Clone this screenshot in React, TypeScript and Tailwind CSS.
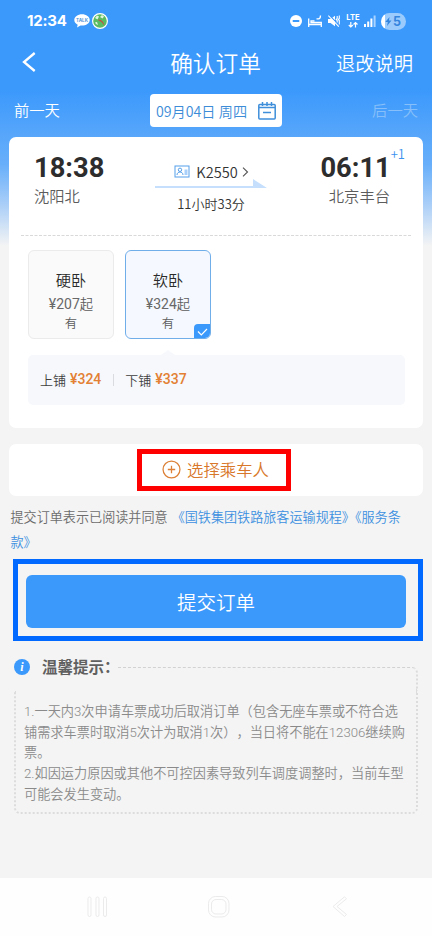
import type { ReactNode } from "react";

const cjk = "font-['Noto_Sans_CJK_SC',sans-serif]";
const mix = "font-[Roboto,'Noto_Sans_CJK_SC',sans-serif]";
const demi = "font-['Noto_Sans_CJK_SC_DemiLight','Noto_Sans_CJK_SC',sans-serif] [font-weight:350]";

function StatusBar() {
  return (
    <div className="flex h-[42px] items-center justify-between pl-[27px] pr-[26px] text-white">
      <div className="flex items-center">
        <span className="w-[47px] font-[Inter,sans-serif] text-[15px] font-bold leading-[20px] tracking-[-0.2px]">12:34</span>
        <svg width="16" height="14" viewBox="0 0 16 14">
          <path d="M8 0.3C3.8 0.3 0.3 2.8 0.3 6c0 2 1.3 3.7 3.4 4.8L3 13.6l3.5-2.1C11.500 12 15.700 9.500 15.700 6 15.700 2.800 12.200 0.300 8 0.300Z" fill="#fff" />
          <text x="8" y="7.700" textAnchor="middle" fontSize="4.600" fontWeight="700" fontFamily="Inter" fill="#5296d8">TALK</text>
        </svg>
        <svg className="ml-[2px]" width="16" height="16" viewBox="0 0 16 16">
          <circle cx="8" cy="8" r="7.400" fill="#5bbb62" stroke="#fff" strokeWidth="1.200" />
          <path d="M3 5 5 2.500l2 1-1.500 3Z M8 4l2-2 2 1.500-1.500 2Z M3 9.500l2-.5 1 3-2-1Z" fill="#e3f5df" />
          <path d="M5.500 6.800c4-.3 6 1.500 6.800 5.700L9.500 9Z" fill="#c74a42" />
        </svg>
      </div>
      <div className="flex items-center">
        <svg width="12" height="12" viewBox="0 0 12 12">
          <circle cx="6" cy="6" r="6" fill="#fff" />
          <rect x="2.700" y="5" width="6.600" height="2" rx="0.500" fill="#3b99fc" />
        </svg>
        <svg className="ml-[6px]" width="14" height="12" viewBox="0 0 14 12" fill="none" stroke="#fff" strokeWidth="1.300">
          <path d="M.7 3.500V12M.7 9.500h12.600M13.300 12V7.500H3V5.800h3.500M8.500 3.800h2c1.500 0 2-1 2-3.300" />
        </svg>
        <svg className="ml-[6px]" width="12" height="12" viewBox="0 0 12 12">
          <path d="M0 4h2.500L7 .8v10.400L2.500 8H0Z" fill="#fff" />
          <path d="m1 0 11 11" stroke="#3b99fc" strokeWidth="1.200" />
          <path d="m.3.600 10.500 11M9.200 1v2.500l-1 1 1 1v2M11.300.5v3l-1 1 1 1v4" fill="none" stroke="#fff" strokeWidth="1.100" />
        </svg>
        <svg className="ml-[6px]" width="14" height="14" viewBox="0 0 14 14">
          <text x="7" y="6.300" textAnchor="middle" fontFamily="Inter" fontSize="7.600" fontWeight="700" fill="#fff">LTE</text>
          <path d="M4.800 8v5M2.800 11l2 2 2-2M9.500 13.500v-5M7.500 10.500l2-2 2 2" fill="none" stroke="#fff" strokeWidth="1.200" />
        </svg>
        <svg className="ml-[4px]" width="12" height="12" viewBox="0 0 12 12">
          <path d="M0 9h2v3H0ZM3.200 6.500h2V12h-2ZM6.400 3.500h2V12h-2Z" fill="#fff" />
          <path d="M9.600.5h2V12h-2Z" fill="#a8d2ff" />
        </svg>
        <div className="ml-[5px] flex h-[17px] w-[25px] items-center overflow-hidden rounded-full bg-gradient-to-r from-white from-[14%] to-[#9bcbfd] to-[14%] pl-[4px]">
          <svg width="7" height="9" viewBox="0 0 7 9"><path d="M4.500 0 .3 5h2.500L2 9l4.500-5.500H4Z" fill="#3485de" /></svg>
          <span className="ml-[1px] font-[Inter,sans-serif] text-[12.500px] font-bold leading-[17px] text-[#3485de]">5</span>
        </div>
      </div>
    </div>
  );
}

function Header() {
  return (
    <div className={`grid h-[42px] grid-cols-[1fr_auto_1fr] items-center pl-[22px] pr-[19px] text-white ${demi}`}>
      <svg className="-mt-[3px]" width="14" height="20" viewBox="0 0 14 20" fill="none" stroke="#fff" strokeWidth="2.300">
        <path d="M12.700 1 2 10l10.700 9" />
      </svg>
      <span className="-ml-[4px] text-[22.700px] leading-[40px]">确认订单</span>
      <span className="justify-self-end text-[19.300px] leading-[40px]">退改说明</span>
    </div>
  );
}

function DateRow() {
  return (
    <div className={`mt-[10px] flex h-[33px] items-center justify-between px-[14px] text-white ${demi}`}>
      <span className="-mt-[3px] w-[136px] text-[15.300px] leading-[32px]">前一天</span>
      <div className="flex h-[33px] w-[132px] items-center justify-between rounded-[4px] bg-white px-[6px] text-[#3c8cd8]">
        <span className="whitespace-nowrap text-[14.200px] leading-[32px]">09月04日 周四</span>
        <svg width="18" height="18" viewBox="0 0 18 18" fill="none" stroke="#3f8fda" strokeWidth="1.500">
          <rect x="0.800" y="2.500" width="16.400" height="14.500" rx="1" />
          <path d="M1 5.500h16M4.500 0v4M9 0v4M13.500 0v4M5 10.500h8" />
        </svg>
      </div>
      <span className="-mt-[3px] w-[136px] text-right text-[15.300px] leading-[32px] text-[#86bff9]">后一天</span>
    </div>
  );
}

function Trip() {
  return (
    <div className="flex h-[98px] justify-between pl-[25px] pr-[16px]">
      <div className="w-[90px] pt-[13px]">
        <div className="font-[Roboto] text-[27.300px] font-bold leading-[36px] text-[#2d2d2d]">18:38</div>
        <div className={`-mt-[1px] text-[15.300px] leading-[20px] text-[#5c5c5c] ${demi}`}>沈阳北</div>
      </div>
      <div className={`-ml-[19px] flex w-[112px] flex-col items-center pt-[24px] text-[#333] ${demi}`}>
        <div className="flex h-[21px] items-center pl-[1px]">
          <svg width="16" height="13" viewBox="0 0 16 13" fill="none" stroke="#569fe9" strokeWidth="1">
            <rect x="1" y="1" width="14" height="11" />
            <circle cx="6" cy="4.800" r="1.700" /><path d="M3 10c0-4 6-4 6 0" />
            <path d="M10.500 4.500h3v5.500h-3Z" fill="#a8d0fa" stroke="none" />
          </svg>
          <span className="ml-[6px] text-[14.600px] leading-[21px]">K2550</span>
          <svg className="ml-[4px]" width="7" height="10" viewBox="0 0 7 10" fill="none" stroke="#555" strokeWidth="1.100"><path d="m1 .7 4.500 4.300L1 9.300" /></svg>
        </div>
        <svg className="-mt-[3px]" width="112" height="10" viewBox="0 0 112 10"><path d="M0 7h98V0l14 9H0Z" fill="#c5dffc" /></svg>
        <span className="mt-[4px] whitespace-nowrap text-[13px] leading-[21px]">11小时33分</span>
      </div>
      <div className="w-[90px] pt-[13px]">
        <div className="flex justify-end">
          <span className="font-[Roboto] text-[27.300px] font-bold leading-[36px] text-[#2d2d2d]">06:11</span>
          <span className={`-mt-[5px] mr-[2px] text-[13px] leading-[18px] text-[#3c92ee] ${demi}`}>+1</span>
        </div>
        <div className={`-mt-[1px] mr-[17px] text-right text-[15.300px] leading-[20px] text-[#5c5c5c] ${demi}`}>北京丰台</div>
      </div>
    </div>
  );
}

function Seat({ name, price, selected }: { name: string; price: string; selected?: boolean }) {
  return (
    <div
      className={`relative h-[89px] w-[86px] overflow-hidden rounded-[6px] border pt-[17px] text-center text-[#5c5c5c] ${
        selected ? "border-[#70aeea] bg-[#f5f9ff]" : "border-[#ebebeb] bg-[#fafafa]"
      }`}
    >
      <div className={`text-[15.200px] leading-[22px] text-[#2a2a2a] ${demi}`}>{name}</div>
      <div className={`mt-[4px] text-[13.300px] leading-[20px] ${demi}`}><span className="font-[Roboto] font-normal text-[14px] text-[#686868]">{price.slice(0, 4)}</span>{price.slice(4)}</div>
      <div className={`mt-[1px] text-[12.300px] leading-[17px] ${demi}`}>有</div>
      {selected && (
        <div className="absolute -bottom-px -right-px flex h-[15px] w-[17px] items-center justify-center rounded-tl-[4px] rounded-br-[5px] bg-[#3b99fc]">
          <svg width="11" height="8" viewBox="0 0 11 8" fill="none" stroke="#fff" strokeWidth="1.200"><path d="m1 3.500 3.300 3.300L10 1" /></svg>
        </div>
      )}
    </div>
  );
}

function Berth({ name, price }: { name: string; price: string }) {
  return (
    <span className="flex items-center gap-[4px]">
      <span className={`text-[13px] text-[#3e3e3e] ${demi}`}>{name}</span>
      <span className="-mt-[3px] font-[Roboto] text-[14px] font-medium text-[#e38033]">{price}</span>
    </span>
  );
}

function TicketCard() {
  return (
    <div className="mx-[9px] mt-[10px] h-[291px] rounded-[7px] bg-white">
      <Trip />
      <svg className="mx-auto block" width="390" height="1"><path d="M0 .5h390" stroke="#d9d9d9" strokeDasharray="3 1.500" /></svg>
      <div className="mt-[14px] flex gap-[11px] pl-[19px]">
        <Seat name="硬卧" price="¥207起" />
        <Seat name="软卧" price="¥324起" selected />
      </div>
      <svg className="ml-[152px] mt-[11px] block" width="14" height="5" viewBox="0 0 14 5"><path d="m0 5 7-5 7 5Z" fill="#f6f8fc" /></svg>
      <div className="ml-[19px] flex h-[50px] w-[377px] items-center rounded-[5px] bg-[#f6f8fc] pl-[12px] leading-[20px]">
        <Berth name="上铺" price="¥324" />
        <span className="mx-[11.500px] h-[12px] w-px bg-[#d9dbe0]" />
        <Berth name="下铺" price="¥337" />
      </div>
    </div>
  );
}

function Outline({ className, children }: { className: string; children: ReactNode }) {
  return <div className={`flex items-center border-[5px] ${className}`}>{children}</div>;
}

function Tips() {
  return (
    <section className="mx-[14px] mt-[14px]">
      <div className="flex h-[24px]">
        <svg className="mt-[4px]" width="16" height="16" viewBox="0 0 16 16">
          <circle cx="8" cy="8" r="8" fill="#3b99fc" />
          <text x="8" y="12" textAnchor="middle" fontSize="12" fontStyle="italic" fontWeight="700" fontFamily="Liberation Serif" fill="#fff">i</text>
        </svg>
        <h2 className={`ml-[12px] w-[76px] whitespace-nowrap text-[15.500px] font-bold leading-[22px] text-[#606060] ${cjk}`}>温馨提示：</h2>
        <div className="mt-[12px] h-[24px] flex-1 rounded-tr-[6px] border-r-2 border-t border-dashed border-r-[#dcdcdc] border-t-[#d2d2d2] [border-right-style:dotted]" />
      </div>
      <div className={`mt-[12px] h-[123px] rounded-b-[6px] border-x-2 border-b-2 border-dotted border-[#dcdcdc] pl-[8px] pt-[11px] text-[13.200px] font-light leading-[20.700px] text-[#8a8a8a] [text-spacing-trim:space-all] ${mix} [font-weight:350]`}>
        <p className="whitespace-nowrap">1.一天内3次申请车票成功后取消订单（包含无座车票或不符合选<br />铺需求车票时取消5次计为取消1次），当日将不能在12306继续购<br />票。</p>
        <p className="whitespace-nowrap">2.如因运力原因或其他不可控因素导致列车调度调整时，当前车型<br />可能会发生变动。</p>
      </div>
    </section>
  );
}

function NavBar() {
  return (
    <div className="mt-auto flex h-[58px] justify-between bg-[#fefefe] pl-[87px] pr-[84px] pt-[18px]">
      <svg width="21" height="22" viewBox="0 0 21 22" fill="none" stroke="#ebebeb">
        <rect x="1" y="1" width="3" height="19.500" rx="1.500" /><rect x="9" y="1" width="3" height="19.500" rx="1.500" /><rect x="16.500" y="1" width="3" height="19.500" rx="1.500" />
      </svg>
      <svg className="-ml-[3px]" width="22" height="22" viewBox="0 0 22 22" fill="none" stroke="#ebebeb">
        <rect x=".5" y=".5" width="20.500" height="20.500" rx="7" /><rect x="3.500" y="3.500" width="14.500" height="14.500" rx="4.500" />
      </svg>
      <svg width="16" height="22" viewBox="0 0 16 22" fill="none" stroke="#ebebeb"><path d="M12.500.8 1 10.500l11.500 10 2-2-9.500-8 9.500-7.700Z" strokeLinejoin="round" /></svg>
    </div>
  );
}

export default function App() {
  return (
    <main className="flex h-[936px] w-[432px] flex-col overflow-hidden bg-[linear-gradient(to_bottom,#3b99fc_0px,#3b99fc_90px,#55a5fb_132px,#68affa_165px,#a9cef8_204px,#f4f4f4_246px)]">
      <StatusBar />
      <Header />
      <DateRow />
      <TicketCard />
      <div className="mx-[9px] mt-[16px] flex h-[52px] justify-center rounded-[7px] bg-white pt-[5px]">
        <Outline className="ml-[-4px] h-[42px] w-[154px] justify-center gap-[6px] border-[#fe0000] pl-[3px]">
          <svg className="-mt-[1px]" width="19" height="19" viewBox="0 0 18 18" fill="none" stroke="#dc8137" strokeWidth="1.200"><circle cx="9" cy="9" r="8" /><path d="M9 5.500v7M5.500 9h7" /></svg>
          <span className={`-mt-[3px] text-[16.400px] leading-[30px] text-[#d8772a] ${demi}`}>选择乘车人</span>
        </Outline>
      </div>
      <p className={`mt-[8px] whitespace-nowrap pl-[10.500px] text-[13.100px] leading-[25px] text-[#6c6c6c] ${demi}`}>
        提交订单表示已阅读并同意<span className="ml-[4px] text-[#3c90e0]">《国铁集团铁路旅客运输规程》《服务条<br />款》</span>
      </p>
      <Outline className="ml-[13px] mt-[5px] h-[82px] w-[410px] border-[#0169ff]">
        <button className={`ml-[8px] mt-[3px] h-[53px] w-[380px] rounded-[6px] bg-[#3b99fc] text-[19.500px] text-white ${demi}`}>提交订单</button>
      </Outline>
      <Tips />
      <NavBar />
    </main>
  );
}
